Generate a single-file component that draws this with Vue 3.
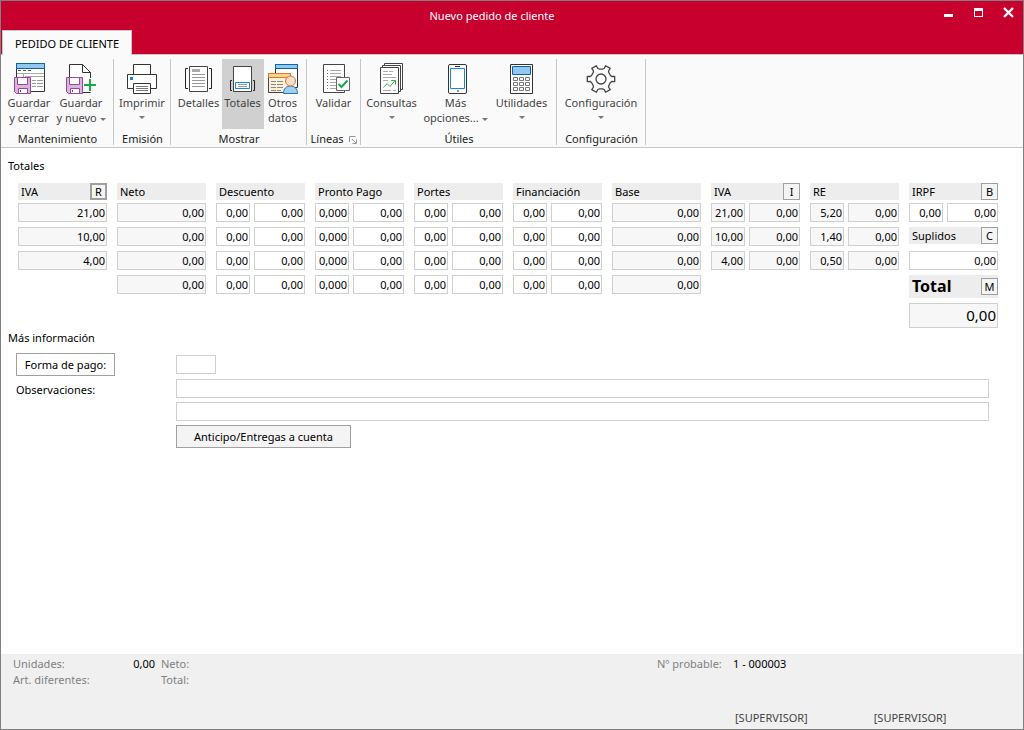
<script setup>
import { reactive } from 'vue'

const pair = (name, first, readonly, rows) => ({
  name,
  rows: rows.map((r, i) => [
    { label: `${name} % ${i + 1}`, value: r ?? first, readonly, narrow: true },
    { label: `${name} ${i + 1}`, value: '0,00', readonly },
  ]),
})
const single = (name, values) => ({
  name,
  rows: values.map((value, i) => [{ label: `${name} ${i + 1}`, value, readonly: true }]),
})
const four = [null, null, null, null]

const columns = reactive([
  { ...single('IVA', ['21,00', '10,00', '4,00']), key: 'R', focused: true },
  single('Neto', ['0,00', '0,00', '0,00', '0,00']),
  pair('Descuento', '0,00', false, four),
  pair('Pronto Pago', '0,000', false, four),
  pair('Portes', '0,00', false, four),
  pair('Financiación', '0,00', false, four),
  single('Base', ['0,00', '0,00', '0,00', '0,00']),
  { ...pair('IVA', '', true, ['21,00', '10,00', '4,00']), key: 'I' },
  pair('RE', '', true, ['5,20', '1,40', '0,50']),
])

const gearPoints = []
for (let i = 0; i < 6; i++) {
  for (const [offset, radius] of [[-22, 10], [-13, 11], [-11, 14], [11, 14], [13, 11], [22, 10]]) {
    const a = ((i * 60 + offset) * Math.PI) / 180
    gearPoints.push(`${(16 + radius * Math.cos(a)).toFixed(1)},${(16 + radius * Math.sin(a)).toFixed(1)}`)
  }
}
const gear = gearPoints.join(' ')
</script>

<template>
  <div class="window">
    <header class="titlebar">
      <h1>Nuevo pedido de cliente</h1>
      <div class="controls">
        <button type="button" aria-label="Minimizar"><svg width="11" height="11"><path d="M1 7h9v3h-9z" fill="#fff" /></svg></button>
        <button type="button" aria-label="Maximizar"><svg width="11" height="11"><path d="M1 1h9v9h-9zM2 4v5h7v-5z" fill="#fff" fill-rule="evenodd" /></svg></button>
        <button type="button" aria-label="Cerrar"><svg width="11" height="11"><path d="M1 1l9 9M10 1l-9 9" stroke="#fff" stroke-width="2.4" /></svg></button>
      </div>
      <button type="button" class="tab">PEDIDO DE CLIENTE</button>
    </header>

    <nav class="ribbon">
      <section class="group g1">
        <div class="tools">
          <button type="button" class="tool">
            <svg width="32" height="32" fill="none">
              <path d="M3.5 0.5h28v28h-28z" fill="#fff" stroke="#333" />
              <path d="M3.5 0.5h28v5h-28z" fill="#91c8f0" stroke="#0a64ad" />
              <path d="M5 7.5h3m2 0h3m2 0h3" stroke="#555" />
              <path d="M4 10.5h27M10.5 11v3M12 13.5h19" stroke="#aaa" />
              <path d="M19 17.5h4m1 0h6M19 20.5h4m1 0h6M19 23.5h4m1 0h6" stroke="#999" />
              <path d="M1.5 14.5h16v16h-14l-2-2z" fill="#ddb2df" stroke="#96489b" />
              <path d="M4.5 14.5h10v7h-10z" fill="#fff" stroke="#96489b" />
              <path d="M5.5 30.5v-5h9v5z" fill="#fff" stroke="#96489b" /><path d="M7.5 27v2" stroke="#555" />
            </svg>
            <span>Guardar<br />y cerrar</span>
          </button>
          <button type="button" class="tool">
            <svg width="32" height="32" fill="none">
              <path d="M4.5 29.5v-28h13l8 8v20z" fill="#fff" stroke="#333" />
              <path d="M17.5 1.5v8h8z" fill="#fff" stroke="#333" />
              <path d="M1.5 14.5h16v16h-14l-2-2z" fill="#ddb2df" stroke="#96489b" />
              <path d="M4.5 14.5h10v7h-10z" fill="#fff" stroke="#96489b" />
              <path d="M5.5 30.5v-5h9v5z" fill="#fff" stroke="#96489b" /><path d="M7.5 27v2" stroke="#555" />
              <path d="M19 22h13M25 15v14" stroke="#fafafa" stroke-width="4" />
              <path d="M19 22h12M25 16v12" stroke="#16aa4b" stroke-width="2" />
            </svg>
            <span>Guardar<br />y nuevo <i class="caret"></i></span>
          </button>
        </div>
        <h2>Mantenimiento</h2>
      </section>

      <section class="group g2">
        <div class="tools">
          <button type="button" class="tool">
            <svg width="32" height="32" fill="none" stroke="#333">
              <path d="M7.5 11.5v-10h17v10" fill="#fff" />
              <path d="M1.5 11.5h29v14h-29z" fill="#fff" />
              <path d="M7.5 20.5h17v10h-17z" fill="#fff" />
              <path d="M10 23.5h12M10 25.5h12M10 27.5h12" stroke="#777" />
              <path d="M4 14h3v3h-3z" fill="#1683d8" stroke="none" />
            </svg>
            <span>Imprimir</span><i class="caret"></i>
          </button>
        </div>
        <h2>Emisión</h2>
      </section>

      <section class="group g3">
        <div class="tools">
          <button type="button" class="tool details">
            <svg width="32" height="32" fill="none" stroke="#444">
              <path d="M6.5 3.5h18v25h-18z" fill="#fff" />
              <path d="M5 5.5h-2.5v20h2.5M26 5.5h2.5v20h-2.5" stroke="#222" />
              <path d="M9 6h8v3h-8z" fill="#aaa" stroke="none" />
              <path d="M9 11.5h13M9 14.5h13M9 17.5h13M9 20.5h13M9 23.5h13" stroke="#999" />
            </svg>
            <span>Detalles</span>
          </button>
          <button type="button" class="tool active" aria-pressed="true">
            <svg width="32" height="32" fill="none" stroke="#444">
              <path d="M6.5 3.5h18v25h-18z" fill="#fff" />
              <path d="M5 17.5h-1.5v10h1.5M26 17.5h1.5v10h-1.5" stroke="#222" />
              <path d="M8.5 19.5h14v6h-14z" stroke="#1788d4" />
              <path d="M11 21.5h9M11 23.5h9" stroke="#999" />
            </svg>
            <span>Totales</span>
          </button>
          <button type="button" class="tool others">
            <svg width="32" height="32" fill="none">
              <path d="M8.5 1.5h22v23h-22z" fill="#fff" stroke="#333" />
              <path d="M8.5 1.5h22v4h-22z" fill="#91c8f0" stroke="#0a64ad" />
              <path d="M1.5 10.5h22v19h-22z" fill="#fdf0d8" stroke="#444" />
              <path d="M1.5 10.5h22v4h-22z" fill="#fad18d" stroke="#d97b28" />
              <path d="M4 18.5h5m1 0h6M4 21.5h5m1 0h6M4 24.5h5m1 0h6M4 27.5h5m1 0h4" stroke="#888" />
              <path d="M16.5 30.5c0-5 3-7.5 7-7.5s7 2.5 7 7.5z" fill="#a3cdee" stroke="#2676b8" />
              <circle cx="23.5" cy="18" r="5" fill="#fbdcc0" stroke="#c9793f" />
            </svg>
            <span>Otros<br />datos</span>
          </button>
        </div>
        <h2>Mostrar</h2>
      </section>

      <section class="group g4">
        <div class="tools">
          <button type="button" class="tool">
            <svg width="32" height="32" fill="none" stroke="#444">
              <path d="M5.5 1.5h21v28h-21z" fill="#fff" />
              <path d="M12 7.5h11M12 10.5h11M12 13.5h11M12 16.5h11M12 19.5h6M12 22.5h6M12 25.5h6" stroke="#aaa" />
              <path d="M9 7.5h1M9 13.5h1M9 22.5h1M9 25.5h1" stroke="#16aa4b" />
              <path d="M9 10.5h1M9 16.5h1M9 19.5h1" stroke="#d03040" />
              <path d="M18.5 14.5h13v13h-13z" fill="#fff" stroke="#666" />
              <path d="M20.5 21l3 3 6-6.5" stroke="#16aa4b" stroke-width="2" />
            </svg>
            <span>Validar</span>
          </button>
        </div>
        <h2>Líneas
          <button type="button" class="launcher" aria-label="Más opciones de líneas">
            <svg width="8" height="8" fill="none" stroke="#999"><path d="M0.5 6v-5.5h6M3 3l4 4M7.5 3.500v4h-4" /></svg>
          </button>
        </h2>
      </section>

      <section class="group g5">
        <div class="tools">
          <button type="button" class="tool queries">
            <svg width="32" height="32" fill="none" stroke="#444">
              <path d="M8.5 0.5h18v26h-18z" fill="#fff" />
              <path d="M6.5 2.5h18v26h-18z" fill="#fff" />
              <path d="M4.5 4.5h18v26h-18z" fill="#fff" />
              <path d="M7 8.5h5m1 0h4M7 11.5h9M7 14.5h13M7 17.5h5M7 27.5h8m2 0h3" stroke="#aaa" />
              <path d="M7.5 24.5l3.5-4 3 3 5-6M15 17.5h4.5v4" stroke="#3cab3c" />
            </svg>
            <span>Consultas</span><i class="caret"></i>
          </button>
          <button type="button" class="tool options">
            <svg width="32" height="32" fill="none" stroke="#333">
              <rect x="8.5" y="1.5" width="18" height="29" rx="1.5" fill="#fff" />
              <path d="M10.5 5.5h14v20h-14z" stroke="#1788d4" />
              <path d="M15 3.5h5M17 28h2" />
            </svg>
            <span>Más<br />opciones... <i class="caret"></i></span>
          </button>
          <button type="button" class="tool utilities">
            <svg width="32" height="32" fill="none" stroke="#333">
              <path d="M4.5 1.5h22v29h-22z" fill="#fff" />
              <path d="M6.5 3.5h18v8h-18z" fill="#91c8f0" stroke="#0a64ad" />
              <path d="M7.5 14.5h4v3h-4zM13.5 14.5h4v3h-4zM19.5 14.5h4v3h-4zM7.5 19.5h4v3h-4zM13.5 19.5h4v3h-4zM19.5 19.5h4v3h-4zM7.5 24.5h4v3h-4zM13.5 24.5h4v3h-4zM19.5 24.5h4v3h-4z" stroke="#777" />
            </svg>
            <span>Utilidades</span><i class="caret"></i>
          </button>
        </div>
        <h2>Útiles</h2>
      </section>

      <section class="group g6">
        <div class="tools">
          <button type="button" class="tool">
            <svg width="32" height="32" fill="none" stroke="#444">
              <polygon :points="gear" fill="#fff" stroke-width="1.3" stroke-linejoin="round" />
              <circle cx="16" cy="16" r="5" stroke-width="1.3" />
            </svg>
            <span>Configuración</span><i class="caret"></i>
          </button>
        </div>
        <h2>Configuración</h2>
      </section>
    </nav>

    <main>
      <h2 class="caption">Totales</h2>
      <div class="totals">
        <section v-for="(col, c) in columns" :key="c" class="column">
          <div class="head">
            <h3>{{ col.name }}</h3>
            <button v-if="col.key" type="button" class="key" :class="{ focused: col.focused }">{{ col.key }}</button>
          </div>
          <div v-for="(row, r) in col.rows" :key="r" class="row">
            <input
              v-for="f in row" :key="f.label" v-model="f.value" type="text"
              :class="{ narrow: f.narrow }" :readonly="f.readonly" :aria-label="f.label"
            />
          </div>
        </section>
        <section class="column">
          <div class="head"><h3>IRPF</h3><button type="button" class="key">B</button></div>
          <div class="row">
            <input type="text" class="narrow" value="0,00" aria-label="IRPF %" />
            <input type="text" value="0,00" aria-label="IRPF" />
          </div>
          <div class="head inner"><label for="suplidos">Suplidos</label><button type="button" class="key">C</button></div>
          <div class="row"><input id="suplidos" type="text" value="0,00" /></div>
          <div class="head total"><label for="total">Total</label><button type="button" class="key">M</button></div>
          <div class="row"><input id="total" class="sum" type="text" value="0,00" readonly /></div>
        </section>
      </div>

      <h2 class="caption more">Más información</h2>
      <div class="form">
        <button type="button" class="btn plain">Forma de pago:</button>
        <input type="text" class="code" aria-label="Forma de pago" />
        <label for="obs1">Observaciones:</label>
        <div class="notes">
          <input id="obs1" type="text" />
          <input type="text" aria-label="Observaciones, línea 2" />
          <button type="button" class="btn advance">Anticipo/Entregas a cuenta</button>
        </div>
      </div>
    </main>

    <footer>
      <dl class="units">
        <dt>Unidades:</dt><dd>0,00</dd><dt class="second">Neto:</dt>
        <dt>Art. diferentes:</dt><dd></dd><dt class="second">Total:</dt>
      </dl>
      <div class="number"><span class="muted">Nº probable:</span><span>1 - 000003</span></div>
      <div class="users"><span>[SUPERVISOR]</span><span>[SUPERVISOR]</span></div>
    </footer>
  </div>
</template>

<style>
body { margin: 0; }
</style>

<style scoped>
* { box-sizing: border-box; }
.window {
  display: flex; flex-direction: column; min-height: 100vh;
  border: 1px solid #808080; background: #fff; color: #000;
  font: 11px/15px "Noto Sans", "Open Sans", sans-serif;
}
h1, h2, h3, dl, dd { margin: 0; font: inherit; }
button, input { font: inherit; color: inherit; margin: 0; border-radius: 0; }
button { padding: 0; border: 0; background: none; }

.titlebar {
  display: grid; grid-template-columns: 1fr auto 1fr; grid-template-rows: 29px 24px;
  background: #c8002d; color: #fff; border-bottom: 1px solid #c6c6c6;
}
.titlebar h1 { grid-column: 2; align-self: center; padding-right: 40px; }
.controls { display: flex; justify-self: end; gap: 19px; padding: 6px 9px 0 0; }
.controls button { width: 11px; height: 11px; }
.controls svg, .tool svg { display: block; }
.tab {
  grid-row: 2; grid-column: 1; justify-self: start; width: 130px; height: 25px; margin-left: 1px;
  background: #fafafa; color: #000; border: 1px solid #c6c6c6; border-bottom: 0;
}

.ribbon { display: flex; padding-top: 4px; background: #fafafa; border-bottom: 1px solid #c6c6c6; }
.group { display: flex; flex-direction: column; border-right: 1px solid #c6c6c6; margin-bottom: 2px; }
.group h2 { height: 16px; text-align: center; white-space: nowrap; color: #222; padding: 2px 0 0 1px; }
.tools { display: flex; justify-content: center; height: 70px; }
.tool {
  display: flex; flex-direction: column; align-items: center; padding-top: 4px; height: 70px;
  color: #444; white-space: nowrap;
}
.tool.active { background: #d0d0d0; }
.g1 { width: 113px; }
.g1 .tools { padding-right: 4px; }
.g2 { width: 57px; }
.g3 { width: 136px; }
.g4 { width: 54px; }
.g5 { width: 196px; }
.g6 { width: 89px; }
.g1 .tool { width: 52px; }
.details { width: 46px; }
.active { width: 42px; }
.others { width: 38px; }
.queries { width: 56px; }
.options { width: 72px; }
.utilities { width: 60px; }
.g5 .tools { padding-right: 2px; }
.caret {
  display: inline-block; border: 3px solid transparent; border-top-color: #777; border-bottom: 0;
  vertical-align: middle;
}
.tool > .caret { margin-top: 6px; }
.launcher { margin-left: 3px; vertical-align: -1px; }
.launcher svg { display: block; }

main { flex: 1; padding-bottom: 16px; }
.caption { padding: 10px 7px 0; }
.totals { display: grid; grid-template-columns: repeat(10, minmax(0, 1fr)); gap: 10px; padding: 10px 25px 0 17px; }
.column { display: flex; flex-direction: column; gap: 5px; }
.head {
  display: flex; align-items: center; justify-content: space-between; height: 17px; padding-left: 3px;
  margin-bottom: -2px; background: #ededed; white-space: nowrap;
}
.head.inner { margin-bottom: 2px; }
.head.total { height: 23px; margin-bottom: 0; font-size: 16px; font-weight: bold; }
.key { width: 17px; height: 17px; border: 1px solid #a0a0a0; background: #f4f4f4; font: 11px/13px "Noto Sans", sans-serif; }
.key.focused { border-width: 2px; line-height: 11px; }
.row { display: flex; gap: 4px; }
input { height: 19px; min-width: 0; border: 1px solid #d0d0d0; padding: 0 1px 1px; background: #fff; outline: 0; }
.row input { flex: 1; width: 0; text-align: right; }
.row .narrow { flex: 0 0 34px; }
input:read-only { background: #f7f7f7; }
.row .sum { height: 25px; font-size: 15px; }

.caption.more { padding-top: 2px; }
.form { display: grid; grid-template-columns: 160px 1fr; padding: 8px 34px 0 15px; row-gap: 3px; }
.btn { height: 23px; border: 1px solid #a0a0a0; background: #f4f4f4; }
.btn.plain { width: 99px; background: #fff; }
.code { width: 40px; align-self: center; }
.form label { padding-top: 3px; }
.notes { display: flex; flex-direction: column; gap: 4px; }
.advance { width: 175px; }

footer {
  display: grid; grid-template-columns: 656fr 366fr; background: #f0f0f0; padding: 2px 0 4px;
}
.units { display: grid; grid-template-columns: 100px 42px 1fr; line-height: 16px; padding-left: 12px; }
.units dt, .muted { color: #808080; }
.units dd { text-align: right; }
.units .second { padding-left: 6px; }
.number { display: grid; grid-template-columns: 76px 1fr; line-height: 16px; }
.users { grid-column: 2; display: flex; gap: 66px; padding: 22px 0 0 78px; color: #444; }
</style>
